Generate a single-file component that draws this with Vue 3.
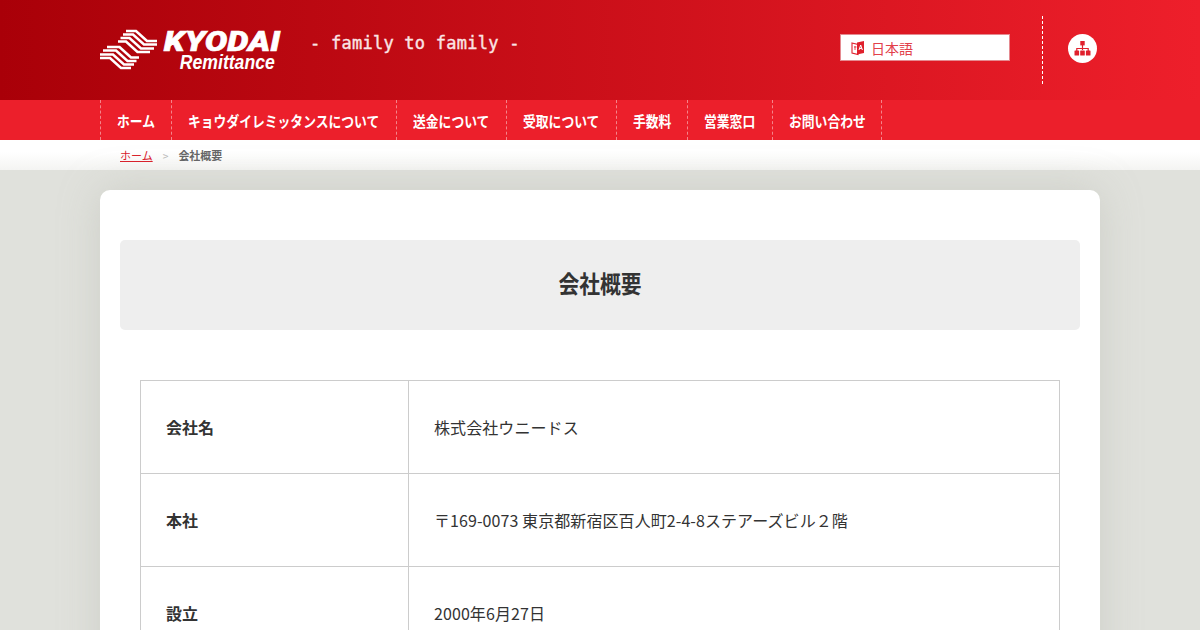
<script setup>
const navItems = ['ホーム', 'キョウダイレミッタンスについて', '送金について', '受取について', '手数料', '営業窓口', 'お問い合わせ']

const rows = [
  { label: '会社名', value: '株式会社ウニードス' },
  { label: '本社', value: '〒169-0073 東京都新宿区百人町2-4-8ステアーズビル２階' },
  { label: '設立', value: '2000年6月27日' },
]

// nav labels are condensed, so the box width comes from the character count
function navWidth(item) {
  return `${(item.length * 12.8).toFixed(1)}px`
}
</script>

<template>
  <div class="page">
    <header class="header">
      <div class="header-inner">
        <div class="logo">
          <svg class="logo-mark" width="58" height="41" viewBox="0 0 58 41">
            <g fill="none" stroke="#fff" stroke-width="2.600">
              <path d="M26 2H36L47 12H57" />
              <path d="M23 5.500H33L44 15.500H57" />
              <path d="M20.500 9H29.500L41 19.500H54" />
              <path d="M18 12.500H26L37.500 23H50" />
            </g>
            <g fill="none" stroke="#fff" stroke-width="2.600" transform="rotate(180 28.500 20.500)">
              <path d="M26 2H36L47 12H57" />
              <path d="M23 5.500H33L44 15.500H57" />
              <path d="M20.500 9H29.500L41 19.500H54" />
              <path d="M18 12.500H26L37.500 23H50" />
            </g>
          </svg>
          <div class="logo-text">
            <div class="logo-name">KYODAI</div>
            <div class="logo-sub">Remittance</div>
          </div>
        </div>
        <div class="tagline">- family to family -</div>
        <div class="lang">
          <svg width="14" height="16" viewBox="0 0 14 16">
            <path d="M1 3l6 1.500v10l-6-1.500z" fill="none" stroke="#e0202c" stroke-width="1.100" />
            <path d="M6 2.500l7-1.500v12l-7 1.500z" fill="#e0202c" />
            <path d="M3 7h2.500M4 6v4" fill="none" stroke="#e0202c" stroke-width="0.800" />
            <path d="M8 10l1.700-5 1.700 5M8.600 8.500h2.200" fill="none" stroke="#fff" stroke-width="1" />
          </svg>
          <span>日本語</span>
        </div>
        <div class="sitemap-wrap">
          <div class="sitemap">
            <svg width="17" height="15" viewBox="0 0 17 15">
              <path d="M8.500 4v5M2.800 10V7.500h11.400V10" fill="none" stroke="#e0202c" stroke-width="1.200" />
              <rect x="6.300" y="0" width="4.400" height="4.400" fill="#e0202c" />
              <rect x="0.500" y="9.500" width="4.600" height="5" rx="0.600" fill="#e0202c" />
              <rect x="6.200" y="9.500" width="4.600" height="5" rx="0.600" fill="#e0202c" />
              <rect x="11.900" y="9.500" width="4.600" height="5" rx="0.600" fill="#e0202c" />
            </svg>
          </div>
        </div>
      </div>
    </header>

    <nav class="nav">
      <ul class="nav-list">
        <li v-for="item in navItems" :key="item">
          <div class="nav-box" :style="{ width: navWidth(item) }">
            <span class="nav-label">{{ item }}</span>
          </div>
        </li>
      </ul>
    </nav>

    <div class="crumbs">
      <div class="crumbs-inner">
        <a class="crumb-link">ホーム</a>
        <span class="crumb-sep">&gt;</span>
        <span class="crumb-current">会社概要</span>
      </div>
    </div>

    <main class="main">
      <section class="card">
        <h1 class="title"><span class="title-text">会社概要</span></h1>
        <table class="info">
          <tbody>
            <tr v-for="row in rows" :key="row.label">
              <th>{{ row.label }}</th>
              <td>{{ row.value }}</td>
            </tr>
          </tbody>
        </table>
      </section>
    </main>
  </div>
</template>

<style>
html,
body {
  margin: 0;
  background: #e0e1dc;
}
</style>

<style scoped>
.page {
  height: 630px;
  overflow: hidden;
  font-family: "Noto Sans CJK JP", "Noto Sans", sans-serif;
  color: #333;
}

.header {
  height: 100px;
  background: linear-gradient(to right, #a90008 0%, #ee1f2b 100%);
}

.header-inner {
  width: 1000px;
  height: 100px;
  margin: 0 auto;
  display: flex;
  align-items: flex-start;
}

.logo {
  width: 210px;
  display: flex;
  padding-top: 29px;
}

.logo-mark {
  flex: none;
}

.logo-text {
  width: 122px;
  color: #fff;
  font-family: "Roboto", "Liberation Sans", sans-serif;
  font-weight: 900;
  font-style: italic;
  text-align: right;
}

.logo-name {
  font-size: 28px;
  line-height: 25px;
  white-space: nowrap;
  -webkit-text-stroke: 0.6px #fff;
  transform: scaleX(1.2);
  transform-origin: right center;
}

.logo-sub {
  font-family: "Liberation Sans", sans-serif;
  font-weight: 700;
  font-size: 20px;
  line-height: 17px;
  padding-right: 6px;
  transform: scaleX(0.88);
  transform-origin: right center;
  white-space: nowrap;
}

.tagline {
  width: 530px;
  margin-top: 31px;
  color: #fbe4e4;
  font-family: "DejaVu Sans Mono", monospace;
  font-size: 17px;
  line-height: 24px;
  letter-spacing: 0.25px;
  -webkit-text-stroke: 0.4px #fbe4e4;
}

.lang {
  width: 170px;
  height: 27px;
  margin-top: 34px;
  box-sizing: border-box;
  background: #fff;
  border: 1px solid #e58a90;
  padding: 1px 0 0 10px;
  display: flex;
  align-items: center;
  gap: 6px;
  color: #e2404a;
  font-size: 14px;
}

.sitemap-wrap {
  width: 55px;
  height: 68px;
  margin: 16px 0 0 32px;
  border-left: 1px dashed #fff;
  display: flex;
  justify-content: flex-end;
  padding-top: 18px;
  box-sizing: border-box;
}

.sitemap {
  width: 29px;
  height: 29px;
  border-radius: 50%;
  background: #fff;
  display: flex;
  align-items: center;
  justify-content: center;
}

.nav {
  height: 40px;
  background: #ec1f2b;
}

.nav-list {
  width: 1000px;
  height: 40px;
  margin: 0 auto;
  padding: 0;
  list-style: none;
  display: flex;
}

.nav-list li {
  padding: 0 16px;
  border-left: 1px dashed #f4848a;
}

.nav-list li:last-child {
  border-right: 1px dashed #f4848a;
}

.nav-box {
  height: 40px;
}

.nav-label {
  display: inline-block;
  color: #fff;
  font-size: 15px;
  font-weight: 700;
  line-height: 42px;
  white-space: nowrap;
  transform: scaleX(0.853);
  transform-origin: left center;
}

.crumbs {
  height: 30px;
  background: linear-gradient(to bottom, #fff 40%, #f4f4f2 100%);
}

.crumbs-inner {
  width: 960px;
  margin: 0 auto;
  display: flex;
  gap: 10px;
  font-size: 11px;
  line-height: 31px;
  font-weight: 500;
}

.crumb-link {
  color: #d8222c;
  text-decoration: underline;
  font-weight: 400;
}

.crumb-sep {
  color: #bbb;
  font-size: 10px;
}

.crumb-current {
  color: #666;
  font-weight: 700;
}

.main {
  padding-top: 20px;
}

.card {
  width: 1000px;
  margin: 0 auto;
  box-sizing: border-box;
  padding: 50px 20px;
  background: #fff;
  border-radius: 10px;
  box-shadow: 0 0 40px rgba(170, 172, 160, 0.35);
}

.title {
  height: 90px;
  margin: 0 0 50px;
  background: #eee;
  border-radius: 5px;
  text-align: center;
  font-size: 24px;
  font-weight: 700;
  line-height: 86px;
  color: #333;
}

.title-text {
  display: inline-block;
  transform: scaleX(0.865);
}

.info {
  width: 920px;
  margin: 0 auto;
  border-collapse: collapse;
  font-size: 16px;
}

.info th,
.info td {
  height: 93px;
  box-sizing: border-box;
  border: 1px solid #ccc;
  padding: 0 25px;
  text-align: left;
  color: #333;
}

.info th {
  width: 268px;
  font-weight: 700;
}

.info td {
  font-weight: 400;
  letter-spacing: 0.080px;
}
</style>
